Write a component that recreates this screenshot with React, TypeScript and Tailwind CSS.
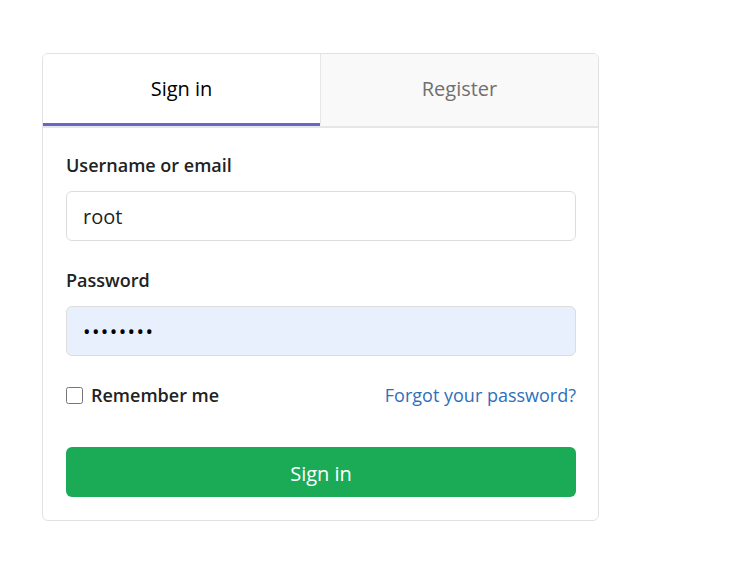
import React, { useState } from 'react';

const App: React.FC = () => {
  const [tab, setTab] = useState<'signin' | 'register'>('signin');

  return (
    <div
      className="min-h-screen bg-white pt-[53px] pl-[42px]"
      style={{ fontFamily: '"Open Sans", "Noto Sans", Arial, sans-serif' }}
    >
      <div className="w-[557px] rounded-md border border-[#e2e2e2] bg-white overflow-hidden">
        {/* Tabs */}
        <div className="flex border-b-2 border-[#e6e6e6]">
          <button
            onClick={() => setTab('signin')}
            className={`flex-1 h-[72px] text-[20px] border-b-[3px] ${
              tab === 'signin'
                ? 'bg-white text-black border-[#6767c9]'
                : 'bg-[#f9f9f9] text-[#6c6c6c] border-transparent'
            }`}
          >
            Sign in
          </button>
          <button
            onClick={() => setTab('register')}
            className={`flex-1 h-[72px] text-[20px] border-l border-[#e6e6e6] border-b-[3px] ${
              tab === 'register'
                ? 'bg-white text-black border-b-[#6767c9]'
                : 'bg-[#f9f9f9] text-[#707070] border-b-transparent'
            }`}
          >
            Register
          </button>
        </div>

        {/* Form */}
        <form className="pl-[23px] pr-[22px] pt-6 pb-[23px]" onSubmit={e => e.preventDefault()}>
          <label className="block text-[18px] font-semibold text-[#222] leading-[26px]">Username or email</label>
          <input
            defaultValue="root"
            className="mt-[13px] block w-full h-[50px] rounded-md border border-[#dcdcdc] px-4 text-[20px] text-[#222] outline-none"
          />

          <label className="mt-[26px] block text-[18px] font-semibold text-[#222] leading-[26px]">Password</label>
          <input
            type="password"
            defaultValue="password"
            className="mt-[13px] block w-full h-[50px] rounded-md border border-[#dcdcdc] bg-[#e8f0fe] px-4 text-[20px] tracking-[1.4px] text-black outline-none"
          />

          <div className="mt-[26px] flex items-center justify-between h-[27px]">
            <label className="flex items-center gap-2 text-[18px] font-semibold text-[#222]">
              <input type="checkbox" className="w-[17px] h-[17px]" />
              Remember me
            </label>
            <a href="#" className="text-[18px] text-[#2f6fba]">Forgot your password?</a>
          </div>

          <button
            type="submit"
            className="mt-[38px] w-full h-[50px] rounded-md bg-[#1bab56] text-white text-[20px] pt-[3px]"
          >
            Sign in
          </button>
        </form>
      </div>
    </div>
  );
};

export default App;
